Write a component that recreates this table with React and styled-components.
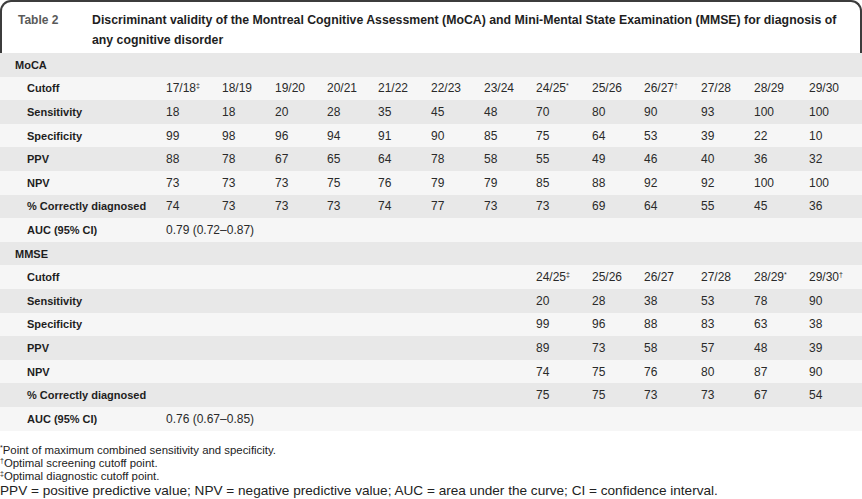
import React from "react"
import styled, { createGlobalStyle } from "styled-components"

const GlobalStyle = createGlobalStyle`
    html, body {
        margin: 0;
        padding: 0;
        background: #ffffff;
    }
    body {
        font-family: "Liberation Sans", Arial, sans-serif;
        color: #222;
    }
`

const Page = styled.div`
    width: 862px;
`

const Header = styled.div`
    display: flex;
    align-items: flex-start;
    box-sizing: border-box;
    height: 53px;
    padding: 8px 16px 0 16px;
    border: 2px solid #3c3c3c;
    border-bottom: none;
    border-radius: 11px 11px 0 0;
`

const TableLabel = styled.div`
    flex: 0 0 74px;
    font-size: 12px;
    line-height: 20px;
    font-weight: bold;
    color: #5a5a5a;
`

const Title = styled.div`
    flex: 1;
    font-size: 12.3px;
    line-height: 20px;
    font-weight: bold;
    color: #1e1e1e;
`

const Table = styled.table`
    width: 862px;
    border-collapse: collapse;
    table-layout: fixed;
    font-size: 11px;
`

const Row = styled.tr`
    height: 23.6px;
    background: ${(p) => (p.$shade ? "#e8e8e8" : "#f6f6f6")};
`

const Label = styled.td`
    padding: 0 0 0 ${(p) => (p.$section ? "15px" : "27px")};
    font-weight: bold;
    white-space: nowrap;
    color: #1e1e1e;
`

const Cell = styled.td`
    padding: 0;
    white-space: nowrap;
    font-size: 12px;
    color: #2a2a2a;
`

const Mark = styled.sup`
    font-size: 7px;
    line-height: 0;
    vertical-align: 4px;
`

const Notes = styled.div`
    padding-top: 13px;
    font-size: 11.4px;
    line-height: 13px;
    color: #222;
`

const Abbrev = styled.div`
    font-size: 13.6px;
    line-height: 16px;
`

const widths = [166, 56, 53, 52, 51, 53, 53, 52, 56, 52, 57, 53, 55, 53]

const mocaCutoffs = [
    ["17/18", "‡"], ["18/19"], ["19/20"], ["20/21"], ["21/22"], ["22/23"], ["23/24"],
    ["24/25", "*"], ["25/26"], ["26/27", "†"], ["27/28"], ["28/29"], ["29/30"],
]

const mocaRows = [
    ["Sensitivity", [18, 18, 20, 28, 35, 45, 48, 70, 80, 90, 93, 100, 100]],
    ["Specificity", [99, 98, 96, 94, 91, 90, 85, 75, 64, 53, 39, 22, 10]],
    ["PPV", [88, 78, 67, 65, 64, 78, 58, 55, 49, 46, 40, 36, 32]],
    ["NPV", [73, 73, 73, 75, 76, 79, 79, 85, 88, 92, 92, 100, 100]],
    ["% Correctly diagnosed", [74, 73, 73, 73, 74, 77, 73, 73, 69, 64, 55, 45, 36]],
]

const mmseCutoffs = [
    ["24/25", "‡"], ["25/26"], ["26/27"], ["27/28"], ["28/29", "*"], ["29/30", "†"],
]

const mmseRows = [
    ["Sensitivity", [20, 28, 38, 53, 78, 90]],
    ["Specificity", [99, 96, 88, 83, 63, 38]],
    ["PPV", [89, 73, 58, 57, 48, 39]],
    ["NPV", [74, 75, 76, 80, 87, 90]],
    ["% Correctly diagnosed", [75, 75, 73, 73, 67, 54]],
]

function Section({ name, cutoffs, rows, auc, start }) {
    const blanks = Array.from({ length: start }, (_, i) => <Cell key={"b" + i} />)
    return (
        <>
            <Row $shade>
                <Label $section colSpan={14}>{name}</Label>
            </Row>
            <Row>
                <Label>Cutoff</Label>
                {blanks}
                {cutoffs.map(([c, m]) => (
                    <Cell key={c}>{c}{m && <Mark>{m}</Mark>}</Cell>
                ))}
            </Row>
            {rows.map(([label, values], i) => (
                <Row key={label} $shade={i % 2 === 0}>
                    <Label>{label}</Label>
                    {blanks}
                    {values.map((v, j) => <Cell key={j}>{v}</Cell>)}
                </Row>
            ))}
            <Row>
                <Label>AUC (95% CI)</Label>
                <Cell colSpan={13}>{auc}</Cell>
            </Row>
        </>
    )
}

export default function App() {
    return (
        <Page>
            <GlobalStyle />
            <Header>
                <TableLabel>Table 2</TableLabel>
                <Title>
                    Discriminant validity of the Montreal Cognitive Assessment (MoCA) and Mini-Mental State Examination (MMSE) for diagnosis of any cognitive disorder
                </Title>
            </Header>
            <Table>
                <colgroup>
                    {widths.map((w, i) => <col key={i} style={{ width: w }} />)}
                </colgroup>
                <tbody>
                    <Section name="MoCA" cutoffs={mocaCutoffs} rows={mocaRows} auc="0.79 (0.72–0.87)" start={0} />
                    <Section name="MMSE" cutoffs={mmseCutoffs} rows={mmseRows} auc="0.76 (0.67–0.85)" start={7} />
                </tbody>
            </Table>
            <Notes>
                <div><Mark>*</Mark>Point of maximum combined sensitivity and specificity.</div>
                <div><Mark>†</Mark>Optimal screening cutoff point.</div>
                <div><Mark>‡</Mark>Optimal diagnostic cutoff point.</div>
                <Abbrev>PPV = positive predictive value; NPV = negative predictive value; AUC = area under the curve; CI = confidence interval.</Abbrev>
            </Notes>
        </Page>
    )
}
